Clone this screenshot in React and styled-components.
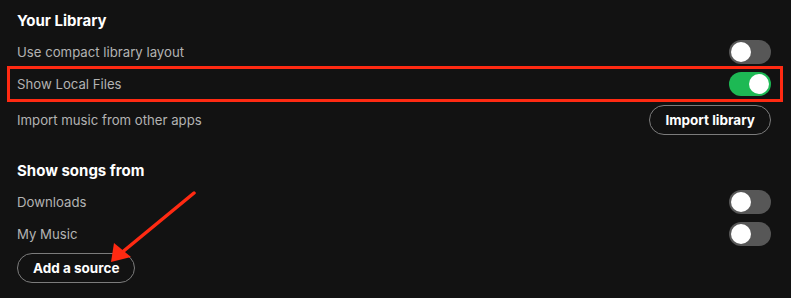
import React from 'react'
import styled, { createGlobalStyle } from 'styled-components'

const Global = createGlobalStyle`
  html, body { margin:0; padding:0; background:#121212; }
  body { font-family: Inter, "Noto Sans", Arial, sans-serif; -webkit-font-smoothing: antialiased; }
`

const Page = styled.div`
  position:relative;
  width:791px;
  height:298px;
  box-sizing:border-box;
  padding:9px 20px 0 17px;
  background:#121212;
  overflow:hidden;
`

const Title = styled.h2`
  margin:${({ $top }) => $top || 0}px 0 3px 0;
  height:24px;
  line-height:24px;
  font-size:15px;
  font-weight:700;
  color:#fff;
`

const Row = styled.div`
  display:flex;
  align-items:center;
  justify-content:space-between;
  height:${({ $h }) => $h || 32}px;
`

const Highlight = styled(Row)`
  height:30px;
  margin:-2px -12px -2px -10px;
  padding:0 9px 0 7px;
  border:3px solid #ff2a12;
`

const Label = styled.span`
  font-size:13.2px;
  color:#b3b3b3;
`

const Toggle = styled.span`
  display:inline-flex;
  align-items:center;
  justify-content:${({ $on }) => ($on ? 'flex-end' : 'flex-start')};
  width:42px;
  height:24px;
  box-sizing:border-box;
  padding:2px;
  border-radius:12px;
  background:${({ $on }) => ($on ? '#1db954' : '#575757')};
  &::after {
    content:'';
    width:20px;
    height:20px;
    border-radius:50%;
    background:#fff;
  }
`

const PillButton = styled.button`
  height:30px;
  padding:0 15px;
  border:1px solid #7c7c7c;
  border-radius:16px;
  background:transparent;
  color:#fff;
  font-family:inherit;
  font-size:13.5px;
  font-weight:700;
  cursor:pointer;
`

const SourceButton = styled(PillButton)`
  margin-top:3px;
`

const Arrow = styled.svg`
  position:absolute;
  left:0;
  top:0;
  pointer-events:none;
`

export default function App() {
  return (
    <>
      <Global />
      <Page>
        <Title>Your Library</Title>
        <Row>
          <Label>Use compact library layout</Label>
          <Toggle />
        </Row>
        <Highlight>
          <Label>Show Local Files</Label>
          <Toggle $on />
        </Highlight>
        <Row $h={40}>
          <Label>Import music from other apps</Label>
          <PillButton>Import library</PillButton>
        </Row>

        <Title $top={19}>Show songs from</Title>
        <Row>
          <Label>Downloads</Label>
          <Toggle />
        </Row>
        <Row>
          <Label>My Music</Label>
          <Toggle />
        </Row>
        <SourceButton>Add a source</SourceButton>

        <Arrow width="791" height="298" viewBox="0 0 791 298">
          <line x1="194" y1="193" x2="120" y2="254" stroke="#ff2a12" strokeWidth="3.5" strokeLinecap="round" />
          <polygon points="111,262 114,243 131,257" fill="#ff2a12" />
        </Arrow>
      </Page>
    </>
  )
}
